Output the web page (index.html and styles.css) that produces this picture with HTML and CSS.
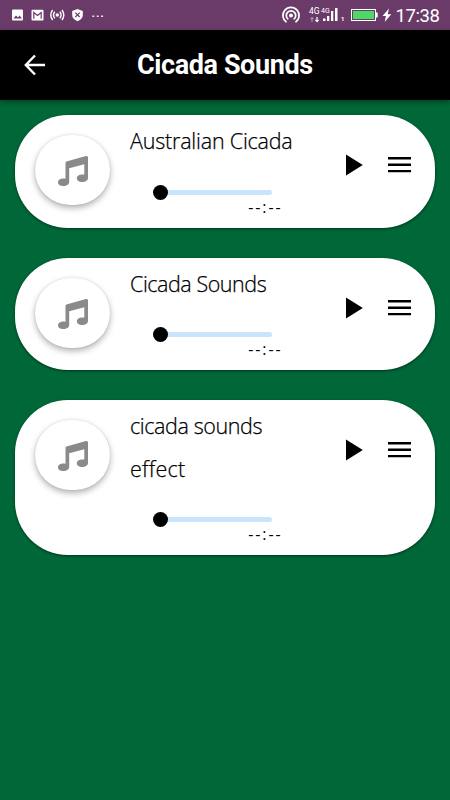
FILE: index.html
```html
<!DOCTYPE html>
<html lang="en">
<head>
<meta charset="utf-8">
<title>Cicada Sounds</title>
<link rel="stylesheet" href="styles.css">
</head>
<body>
<svg class="defs" aria-hidden="true">
  <symbol id="note" viewBox="0 0 30 30"><path d="M8.4 5.6 L28 .1 Q30 -.4 30 1.5 V22 C30 24.4 27.4 26 24.4 26 C21.2 26 18.8 24.4 18.8 22.2 C18.8 19.4 22.6 17.8 26.3 18.6 V8.3 L11.2 12.2 V26 C11.2 28.4 8.6 30 5.6 30 C2.4 30 0 28.6 0 26.4 C0 23.6 3.8 22 7.5 22.8 V7 Q7.5 5.9 8.4 5.6Z"/></symbol>
  <symbol id="play" viewBox="0 0 18 22"><path d="M1 .5V21.5L17.8 11Z"/></symbol>
  <symbol id="menu" viewBox="0 0 23 16"><path d="M0 0h23v2.5H0zM0 6.6h23v2.3H0zM0 13h23v2.3H0z"/></symbol>
</svg>
<header class="status">
  <svg class="status-left" width="108" height="30" viewBox="0 0 108 30" fill="none" stroke="#fff">
    <rect x="12" y="9.5" width="11" height="11" rx="1" fill="#fff" stroke="none"/>
    <path d="M13.5 18.5l2.5-3 2 2 1.5-2 2.5 3z" fill="#6a3b69" stroke="none"/>
    <rect x="31.5" y="9.8" width="12" height="10.7" rx="1" fill="#fff" stroke="none"/>
    <path d="M33.8 18.8v-6.3l3.7 3 3.7-3v6.3" stroke="#6a3b69" stroke-width="1.2"/>
    <circle cx="57.3" cy="15" r="1.7" fill="#fff" stroke="none"/>
    <path d="M54.8 11.8q-2.6 3.2 0 6.4M59.8 11.8q2.6 3.2 0 6.4M52.6 10q-3.6 5 0 10M62 10q3.6 5 0 10" stroke-width="1.4"/>
    <path d="M77.5 9l5.3 2v4q0 4-5.3 6.2Q72.2 19 72.2 15v-4z" fill="#fff" stroke="none"/>
    <path d="M75.3 12.6l4.4 4.4m0-4.4l-4.4 4.4" stroke="#6a3b69" stroke-width="1.2"/>
    <path d="M92.3 16.3h2m2.4 0h2m2.4 0h2" stroke-width="1.5" opacity=".85"/>
  </svg>
  <div class="status-right">
    <svg width="124" height="30" viewBox="0 0 124 30" fill="none" stroke="#fff">
      <circle cx="21" cy="15.5" r="2" fill="#fff" stroke="none"/>
      <path d="M18.3 19.4a4.7 4.7 0 1 1 5.4 0M16.5 22.2a8.1 8.1 0 1 1 9 0" stroke-width="1.7"/>
      <path d="M42 22v-4.5m-1.6 1.7l1.6-1.7 1.6 1.7" stroke-width="1" opacity=".5"/>
      <path d="M47 17v4.5m-1.6-1.7l1.6 1.7 1.6-1.7" stroke-width="1.2"/>
      <path d="M53 21v-2.5h2.5V21zM57 21v-5h2.3v5zM61 21V11h2.3v10zM65 21V8h2.5v13z" fill="#fff" stroke="none"/>
      <rect x="81.5" y="9.5" width="24" height="11" stroke-width="1"/>
      <rect x="83" y="11" width="21" height="8" fill="#4cd964" stroke="none"/>
      <path d="M106 12.5h1.7v5H106z" fill="#fff" stroke="none"/>
      <path d="M119 8.5l-6.5 7.5h3.4l-1.2 6 6.6-7.8h-3.6z" fill="#fff" stroke="none"/>
      <text class="net" x="39" y="13.5">4G</text><text class="net net-small" x="51" y="13">4G</text>
      <text class="net net-sim" x="71" y="20.8">1</text>
    </svg>
    <span class="clock">17:38</span>
  </div>
</header>
<nav class="bar">
  <svg class="back" width="22" height="22" viewBox="0 0 22 22"><path d="M21 11H2.5M11 1.5L1.8 11l9.2 9.5"/></svg>
  <h1>Cicada Sounds</h1>
</nav>
<main class="list">
  <article class="card">
    <div class="art"><svg><use href="#note"/></svg></div>
    <div class="body"><h2 class="t-one">Australian Cicada</h2><div class="slider"><i class="thumb"></i></div><span class="time">--:--</span></div>
    <svg class="play"><use href="#play"/></svg><svg class="menu"><use href="#menu"/></svg>
  </article>
  <article class="card">
    <div class="art"><svg><use href="#note"/></svg></div>
    <div class="body"><h2 class="t-two">Cicada Sounds</h2><div class="slider"><i class="thumb"></i></div><span class="time">--:--</span></div>
    <svg class="play"><use href="#play"/></svg><svg class="menu"><use href="#menu"/></svg>
  </article>
  <article class="card">
    <div class="art"><svg><use href="#note"/></svg></div>
    <div class="body"><h2 class="t-three">cicada sounds <span class="wide">effect</span></h2><div class="slider"><i class="thumb"></i></div><span class="time">--:--</span></div>
    <svg class="play"><use href="#play"/></svg><svg class="menu"><use href="#menu"/></svg>
  </article>
</main>
</body>
</html>
```
FILE: styles.css
```css
* { box-sizing: border-box; }
body { margin: 0; min-height: 800px; background: #006838; font-family: Roboto, sans-serif; }
svg { display: block; flex: none; }
.defs { display: none; }
.status { height: 30px; background: #6a3b69; display: flex; justify-content: space-between; color: #fff; }
.status-right { display: flex; width: 180px; }
.clock { font-size: 18.5px; line-height: 32px; margin-left: 1.5px; letter-spacing: -.4px; white-space: nowrap; }
.net { fill: #fff; stroke: none; font: 8.5px Roboto, sans-serif; }
.net-small { font-size: 7px; }
.net-sim { font-size: 6px; font-weight: 700; }
.bar { height: 70px; background: #000; display: flex; align-items: center; padding-left: 24px; box-shadow: 0 2px 6px rgba(0,0,0,.4); }
.back { fill: none; stroke: #fff; stroke-width: 2.4; }
h1 { margin: 0 0 1px 91px; color: #fff; font-size: 27px; font-weight: 700; line-height: 36px; letter-spacing: -.4px; white-space: nowrap; }
.list { padding: 15px; display: flex; flex-direction: column; gap: 30px; }
.card { background: #fff; border-radius: 53px; min-height: 112.5px; padding-left: 20px; display: flex; align-items: flex-start; box-shadow: 0 1px 3px rgba(0,0,0,.5); }
.art { flex: none; width: 75px; height: 70px; margin-top: 20px; border-radius: 35px; display: flex; align-items: center; justify-content: center; box-shadow: 0 3px 6px rgba(0,0,0,.3), 0 0 2px rgba(0,0,0,.12); }
.art svg { width: 30px; height: 30px; fill: #8a8a8a; margin-top: 2px; }
.body { flex: none; width: 180px; margin-left: 20px; padding-top: 5px; }
h2 { margin: 0; font: 300 21.5px/42.5px "Open Sans", sans-serif; color: #000; -webkit-text-stroke: .25px #000; }
.t-one { letter-spacing: -.2px; }
.t-two { letter-spacing: -.45px; }
.t-three { letter-spacing: -.4px; }
.wide { letter-spacing: .25px; }
.slider { margin: 27px 0 0 30px; width: 112px; height: 5px; border-radius: 3px; background: #c9e4fb; display: flex; align-items: center; }
.thumb { width: 15px; height: 15px; margin-left: -7.5px; border-radius: 50%; background: #000; flex: none; }
.time { display: block; width: 152.5px; text-align: right; font: 16px/24px "Open Sans", sans-serif; margin-bottom: 9px; letter-spacing: 1.9px; }
.play { width: 18px; height: 22px; margin: 39px 0 0 35px; }
.menu { width: 23px; height: 16px; margin: 42px 0 0 24.5px; }
```
